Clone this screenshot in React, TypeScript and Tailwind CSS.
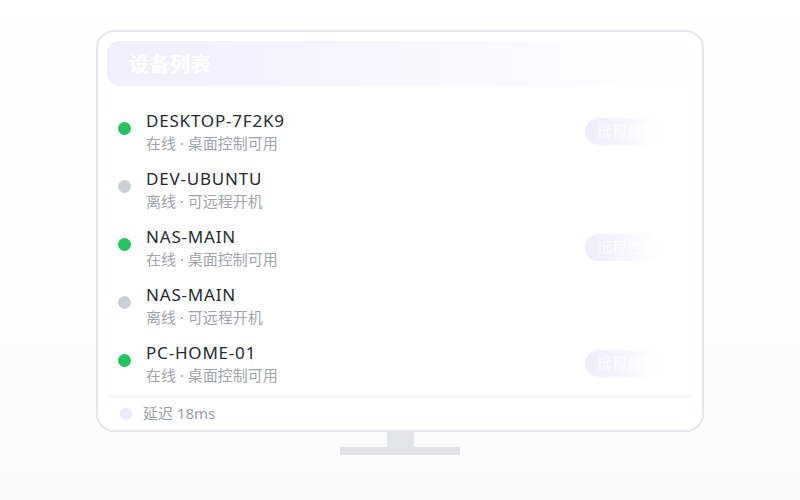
import React from 'react';

const devices = [
  { name: 'DESKTOP-7F2K9', online: true },
  { name: 'DEV-UBUNTU', online: false },
  { name: 'NAS-MAIN', online: true },
  { name: 'NAS-MAIN', online: false },
  { name: 'PC-HOME-01', online: true },
];

const App: React.FC = () => {
  return (
    <div
      className="w-[800px] h-[500px] bg-gradient-to-b from-white via-[#fdfdfd] to-[#fafafb] flex flex-col items-center pt-[30px]"
      style={{ fontFamily: '"Noto Sans", "Noto Sans CJK SC", sans-serif' }}
    >
      {/* Screen */}
      <div className="w-[608px] h-[402px] bg-white border-2 border-[#e4e7ec] rounded-[18px] pt-[9px] px-[9px] flex flex-col">
        <div className="h-[45px] shrink-0 rounded-xl bg-gradient-to-r from-[#f1eefe] via-[#f8f6ff] to-white flex items-center justify-between pl-[22px] pr-[24px] pt-[3px]">
          <span className="text-[20px] font-bold text-white tracking-[0.5px]">设备列表</span>
          <span className="text-[13px] text-white/80">3 台在线</span>
        </div>

        <div className="flex flex-col pt-[16px] pb-[4px]">
          {devices.map((d, i) => (
            <div key={i} className="h-[58px] flex items-center pl-[11px] pr-[32px]">
              <div className="flex items-start flex-1">
                <span
                  className={
                    'w-[13px] h-[13px] rounded-full mt-[12px] ' +
                    (d.online ? 'bg-[#22c55e]' : 'bg-[#cbd0d8]')
                  }
                />
                <div className="ml-[15px] flex flex-col gap-[1px]">
                  <span className="text-[17px] leading-[22px] text-[#262a31] tracking-[0.8px]">
                    {d.name}
                  </span>
                  <span className="text-[15px] leading-[20px] text-[#a0a5ad]">
                    {d.online ? '在线 · 桌面控制可用' : '离线 · 可远程开机'}
                  </span>
                </div>
              </div>
              {d.online && (
                <button
                  className="h-[27px] w-[76px] rounded-full bg-gradient-to-r from-[#efecfe] via-[#f6f4ff] to-white text-white text-[15px] text-left pl-[12px]"
                  style={{ fontFamily: '"Noto Serif CJK SC", serif' }}
                >
                  远程控制
                </button>
              )}
            </div>
          ))}
        </div>

        <div className="h-[34px] shrink-0 border-t border-[#eef0f3] flex items-center pl-[13px]">
          <span className="w-[12px] h-[12px] rounded-full bg-[#eeeafe]" />
          <span className="ml-[11px] text-[15px] text-[#9aa0a8]">延迟 18ms</span>
        </div>
      </div>

      {/* Stand */}
      <div className="w-[27px] h-[15px] bg-[#e1e5e9]" />
      <div className="w-[120px] h-[8px] bg-[#e1e5e9]" />
    </div>
  );
};

export default App;
